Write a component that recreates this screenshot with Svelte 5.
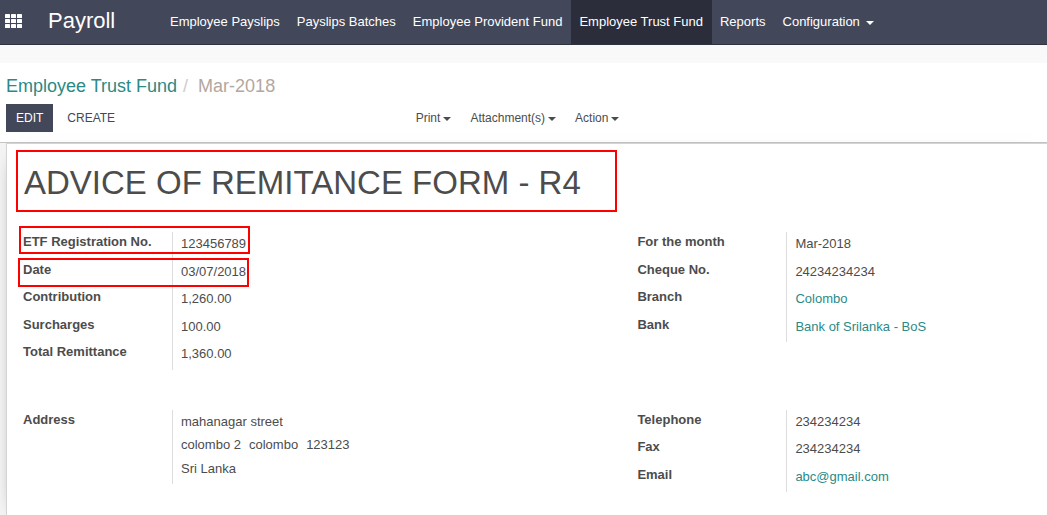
<script>
  const menu = [
    { label: 'Employee Payslips' },
    { label: 'Payslips Batches' },
    { label: 'Employee Provident Fund' },
    { label: 'Employee Trust Fund', active: true },
    { label: 'Reports' },
    { label: 'Configuration', caret: true }
  ];

  const actions = ['Print', 'Attachment(s)', 'Action'];

  const groups = [
    [
      { label: 'ETF Registration No.', value: '123456789', mark: 'number' },
      { label: 'Date', value: '03/07/2018', mark: 'date' },
      { label: 'Contribution', value: '1,260.00' },
      { label: 'Surcharges', value: '100.00' },
      { label: 'Total Remittance', value: '1,360.00' }
    ],
    [
      { label: 'For the month', value: 'Mar-2018' },
      { label: 'Cheque No.', value: '24234234234' },
      { label: 'Branch', value: 'Colombo', href: '#branch' },
      { label: 'Bank', value: 'Bank of Srilanka - BoS', href: '#bank' }
    ],
    [
      {
        label: 'Address',
        lines: [['mahanagar street'], ['colombo 2', 'colombo', '123123'], ['Sri Lanka']]
      }
    ],
    [
      { label: 'Telephone', value: '234234234' },
      { label: 'Fax', value: '234234234' },
      { label: 'Email', value: 'abc@gmail.com', href: 'mailto:abc@gmail.com' }
    ]
  ];
</script>

<div class="page">
  <header class="navbar">
    <button class="apps" aria-label="Applications">
      <svg width="17" height="14" viewBox="0 0 17 14" fill="currentColor" aria-hidden="true">
        {#each [0, 5, 10] as y}
          {#each [0, 6, 12] as x}
            <rect {x} {y} width="5" height="4" rx="0.6" />
          {/each}
        {/each}
      </svg>
    </button>
    <a class="brand" href="#payroll">Payroll</a>
    <nav class="menu">
      {#each menu as item}
        <a href="#menu" class:active={item.active}>
          {item.label}{#if item.caret}<span class="caret"></span>{/if}
        </a>
      {/each}
    </nav>
  </header>

  <section class="control-panel">
    <nav class="breadcrumb" aria-label="Breadcrumb">
      <a href="#etf">Employee Trust Fund</a>
      <span class="slash">/</span>
      <span class="current">Mar-2018</span>
    </nav>
    <div class="toolbar">
      <div class="buttons">
        <button class="primary">EDIT</button>
        <button class="flat">CREATE</button>
      </div>
      <div class="actions">
        {#each actions as action}
          <button>{action}<span class="caret"></span></button>
        {/each}
      </div>
    </div>
  </section>

  <main class="view">
    <article class="sheet">
      <h1>ADVICE OF REMITANCE FORM - R4</h1>
      <div class="groups">
        {#each groups as group}
          <dl>
            {#each group as field}
              <div class="field">
                <dt>{field.label}</dt>
                {#if field.lines}
                  <dd class="address">
                    {#each field.lines as line}
                      <div class="line">
                        {#each line as part}<span>{part}</span>{/each}
                      </div>
                    {/each}
                  </dd>
                {:else}
                  <dd>
                    {#if field.href}<a href={field.href}>{field.value}</a>{:else}{field.value}{/if}
                  </dd>
                {/if}
                {#if field.mark}<span class="mark {field.mark}"></span>{/if}
              </div>
            {/each}
          </dl>
        {/each}
      </div>
    </article>
  </main>
</div>

<style>
  :global(body) {
    margin: 0;
    background: #f9f9f9;
    color: #4c4c4c;
    font: 13px/1.5 "Liberation Sans", Arial, sans-serif;
  }

  .page {
    display: flex;
    flex-direction: column;
    min-height: 100vh;
  }

  a {
    color: #2a8a87;
    text-decoration: none;
  }

  button {
    border: 0;
    padding: 0;
    background: none;
    color: inherit;
    font: inherit;
    cursor: pointer;
  }

  .caret {
    display: inline-block;
    margin-left: 6px;
    border: 4px solid transparent;
    border-top-color: currentColor;
    border-bottom: 0;
    vertical-align: middle;
  }

  .navbar {
    display: flex;
    align-items: stretch;
    height: 44px;
    border-bottom: 1px solid #2f3241;
    background: #43475a;
    color: #fff;
  }

  .apps {
    display: flex;
    align-items: center;
    padding: 0 5px 2px;
  }

  .brand {
    width: 114px;
    padding-left: 21px;
    color: #fff;
    font-size: 22px;
    line-height: 42px;
  }

  .menu {
    display: flex;
    white-space: nowrap;
  }

  .menu a {
    padding: 0 9px 0 8px;
    color: #fff;
    line-height: 44px;
  }

  .menu a.active {
    background: #2b2e3a;
  }

  .control-panel {
    margin-top: 18px;
    padding: 9px 6px 10px;
    border-bottom: 1px solid #c4c4c4;
    background: #fff;
  }

  .breadcrumb {
    display: flex;
    font-size: 18px;
    line-height: 28px;
  }

  .slash {
    margin: 0 10px 0 6px;
    color: #ccc;
  }

  .current {
    color: #b3a79f;
  }

  .toolbar {
    display: grid;
    grid-template-columns: 19fr 29fr;
    margin-top: 4px;
    font-size: 12px;
    line-height: 28px;
  }

  .buttons {
    display: flex;
    gap: 4px;
  }

  .buttons button {
    padding: 0 10px;
    color: #43475a;
  }

  .buttons .primary {
    background: #43475a;
    color: #fff;
  }

  .actions {
    display: flex;
    gap: 19px;
  }

  .actions .caret {
    margin-left: 3px;
  }

  .view {
    display: flex;
    flex: 1;
    padding-left: 6px;
    background: #f4f4f4;
  }

  .sheet {
    flex: 1;
    border: 1px solid #d4d4d4;
    border-width: 1px 0 0 1px;
    padding: 6px 0 0 9px;
    background: #fff;
    box-shadow: 0 5px 20px -15px #000;
  }

  h1 {
    width: fit-content;
    margin: 0;
    padding: 6px 34px 2px 6px;
    border: 2px solid #f00;
    font-size: 33px;
    font-weight: 400;
    line-height: 50px;
  }

  .groups {
    display: grid;
    grid-template-columns: 3fr 2fr;
    row-gap: 40px;
    margin: 20px 0 0 7px;
    align-items: start;
  }

  dl {
    margin: 0;
  }

  .field {
    position: relative;
    display: grid;
    grid-template-columns: 149px 1fr;
  }

  dt {
    font-weight: 700;
  }

  dd {
    margin: 0;
    padding: 2px 8px 6px;
    border-left: 1px solid #ddd;
  }

  .address {
    padding-bottom: 2px;
  }

  .line {
    display: flex;
    gap: 8px;
    padding-bottom: 4px;
  }

  .mark {
    position: absolute;
    border: 2px solid #f00;
    box-sizing: border-box;
    pointer-events: none;
  }

  .number {
    top: -6px;
    left: -4px;
    width: 231px;
    height: 28px;
  }

  .date {
    top: -2px;
    left: -5px;
    width: 231px;
    height: 29px;
  }
</style>
